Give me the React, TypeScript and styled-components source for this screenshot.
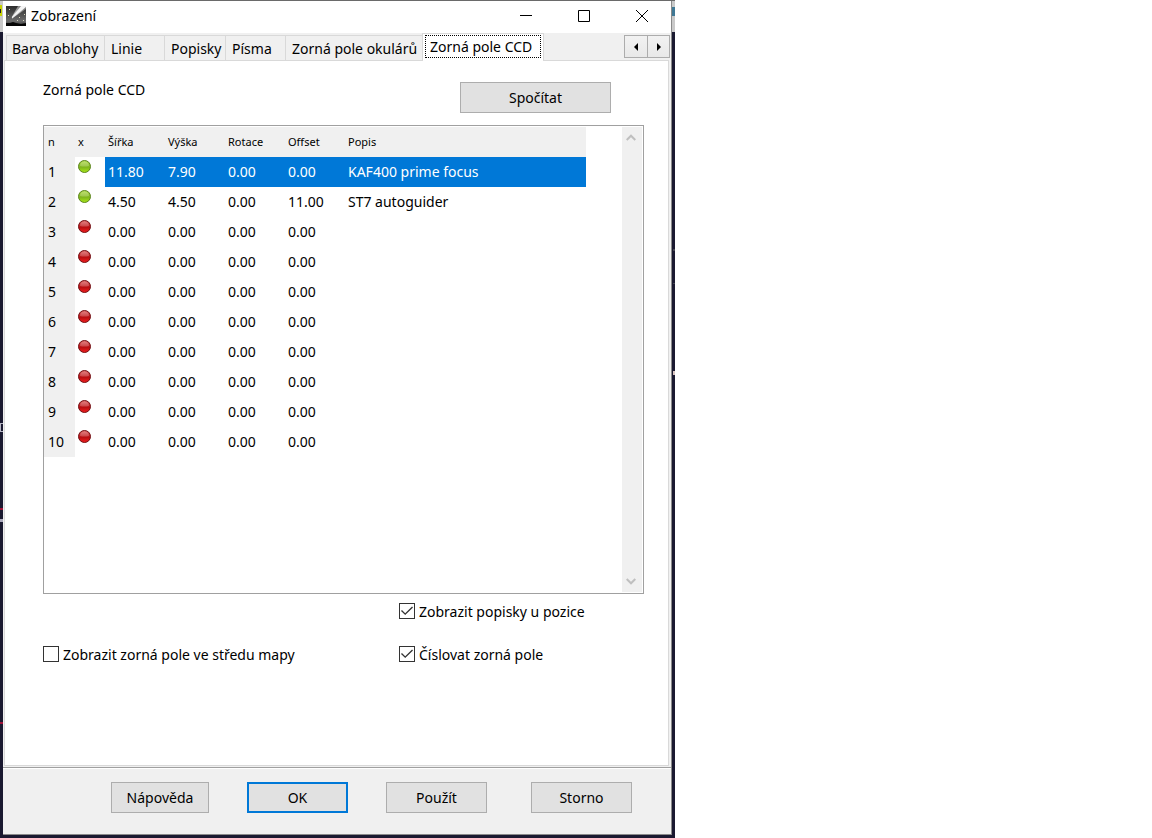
import React from 'react';
import styled, { createGlobalStyle, css } from 'styled-components';

const GlobalStyle = createGlobalStyle`
  * { box-sizing: border-box; }
  body {
    margin: 0;
    background: #fff;
    color: #000;
    font-family: "Noto Sans", "Open Sans", sans-serif;
    font-size: 14px;
    line-height: 20px;
  }
  button, input { font: inherit; color: inherit; }
`;

const Desktop = styled.div`
  position: relative;
  display: flex;
  width: 100%;
  max-width: 675px;
  min-height: 100vh;
  padding: 1px 3px 3px;
  background: linear-gradient(#6a6a6a 1px, #c9c9c9 1px, #c9c9c9 32px, #1a1930 32px);
`;

const Sky = styled.svg`
  position: absolute;
  inset: 0;
  width: 100%;
  height: 100%;
`;

const Window = styled.main`
  position: relative;
  flex: 1;
  min-width: 0;
  display: flex;
  flex-direction: column;
  background: #f0f0f0;
  border-right: 1px solid #8a8a8a;
  border-bottom: 1px solid #8a8a8a;
`;

const TitleBar = styled.header`
  display: flex;
  height: 32px;
  padding: 5px 0 0 3px;
  background: #fff;
`;

const Title = styled.h1`
  flex: 1;
  margin: 0 0 0 5px;
  font-size: 14px;
  font-weight: 400;
`;

const CaptionButton = styled.button`
  display: grid;
  place-items: center;
  width: 58px;
  height: 20px;
  padding: 0;
  border: 0;
  background: none;
`;

const TabStrip = styled.nav`
  display: flex;
  align-items: flex-end;
  height: 27px;
  padding-left: 3px;
`;

const Tab = styled.button<{ $width: number; $active?: boolean }>`
  width: ${(p) => p.$width}px;
  height: 25px;
  padding: 2px 0 0 6px;
  border: 1px solid #d9d9d9;
  border-width: 1px 0 0 1px;
  background: #f0f0f0;
  text-align: left;
  white-space: nowrap;
  &:first-child { padding-left: 5px; }
  ${(p) =>
    p.$active &&
    css`
      position: relative;
      height: 28px;
      margin-bottom: -1px;
      padding: 0 2px 2px;
      border-right-width: 1px;
      background: #fff;
    `}
`;

const Focus = styled.span`
  display: block;
  padding-left: 4px;
  border: 1px dotted #000;
  line-height: 21px;
`;

const Spinner = styled.div`
  display: flex;
  align-self: flex-start;
  margin: 2px 1px 0 auto;
`;

const SpinButton = styled.button`
  display: grid;
  place-items: center;
  width: 24px;
  height: 23px;
  padding: 0;
  border: 1px solid #acacac;
  background: linear-gradient(#f2f2f2, #e8e8e8);
  & + & { width: 22px; border-left: 0; }
`;

const Panel = styled.section`
  flex: 1;
  margin: 0 2px 1px 1px;
  padding: 21px 24px 0 38px;
  border: 1px solid #d9d9d9;
  background: #fff;
`;

const PanelHead = styled.div`
  display: flex;
  justify-content: space-between;
  padding-right: 33px;
`;

const Heading = styled.h2`
  margin: 0;
  font-size: 14px;
  font-weight: 400;
  line-height: 16px;
`;

const PushButton = styled.button<{ $width: number; $primary?: boolean }>`
  width: ${(p) => p.$width}px;
  height: 31px;
  padding: 0;
  border: ${(p) => (p.$primary ? '2px solid #0078d7' : '1px solid #adadad')};
  background: #e1e1e1;
`;

const ListFrame = styled.div`
  display: flex;
  justify-content: space-between;
  height: 469px;
  margin-top: 12px;
  padding: 1px 1px 1px 0;
  border: 1px solid #a0a0a0;
`;

const Grid = styled.table`
  flex: 0 1 542px;
  width: 542px;
  height: min-content;
  table-layout: fixed;
  border-collapse: collapse;
`;

const HeadCell = styled.th<{ $width?: number }>`
  width: ${(p) => (p.$width ? `${p.$width}px` : 'auto')};
  height: 30px;
  padding: 0 3px;
  background: #f0f0f0;
  font-size: 11px;
  font-weight: 400;
  text-align: left;
  &:first-child { padding-left: 4px; }
`;

const NumberCell = styled.th`
  height: 30px;
  padding: 0 3px 0 4px;
  background: #f0f0f0;
  font-weight: 400;
  text-align: left;
`;

const StateCell = styled.td`
  padding: 3px 3px 0;
  vertical-align: top;
  svg { display: block; }
`;

const Cell = styled.td<{ $selected: boolean }>`
  padding: 0 3px;
  background: ${(p) => (p.$selected ? '#0078d7' : '#fff')};
  color: ${(p) => (p.$selected ? '#fff' : '#000')};
`;

const ScrollTrack = styled.div`
  display: flex;
  flex-direction: column;
  justify-content: space-between;
  width: 20px;
  background: #f0f0f0;
`;

const ScrollButton = styled.button`
  display: grid;
  place-items: center;
  height: 21px;
  padding: 0 2px 0 0;
  border: 0;
  background: none;
`;

const Options = styled.div`
  display: grid;
  grid-template-columns: 356px 1fr;
  row-gap: 23px;
  margin-top: 7px;
`;

const Option = styled.label`
  grid-column: 2;
  display: flex;
  align-items: center;
  gap: 4px;
  height: 20px;
`;

const CenterOption = styled(Option)`
  grid-column: 1;
`;

const OptionText = styled.span`
  padding-top: 2px;
`;

const Tick = styled.input`
  appearance: none;
  flex: none;
  width: 16px;
  height: 16px;
  margin: 0;
  border: 1px solid #333;
  background: #fff;
  display: grid;
  place-items: center;
  &:checked::before {
    content: "";
    width: 12px;
    height: 10px;
    background: #333;
    clip-path: polygon(0 50%, 8% 41%, 35% 72%, 92% 5%, 100% 14%, 35% 90%);
  }
`;

const Footer = styled.footer`
  display: flex;
  justify-content: space-between;
  height: 67px;
  padding: 14px 39px 0 108px;
  border-top: 1px solid #a0a0a0;
  box-shadow: inset 0 1px #fff;
`;

const ButtonGroup = styled.div`
  display: flex;
  gap: 38px;
`;

const CometIcon = () => (
  <svg width="20" height="20" viewBox="0 0 20 20" aria-hidden="true">
    <defs>
      <linearGradient id="night" x1="0" y1="0" x2="0" y2="1">
        <stop offset="0" stopColor="#2c2c2c" />
        <stop offset=".75" stopColor="#6c6c6c" />
        <stop offset="1" stopColor="#333" />
      </linearGradient>
      <linearGradient id="tail" x1="0" y1="1" x2="1" y2="0">
        <stop offset="0" stopColor="#fff" />
        <stop offset="1" stopColor="#9a9a9a" />
      </linearGradient>
    </defs>
    <path d="M0 0h20v20H0z" fill="url(#night)" />
    <path d="M6 12.500 5.800 11 12 0h8v3z" fill="url(#tail)" opacity=".65" />
    <path d="M6 12.500 6 11 15 0h5v1z" fill="#f4f4f4" />
    <path d="M0 17l4 0 3-1 3 1 5 1 5-1v3H0z" fill="#050505" />
    <path d="M3 3h1v1H3zM13 11h1v1h-1zM17 14h1v1h-1zM2 9h1v1H2zM11 14h1v1h-1zM18 8h1v1h-1z" fill="#d8d8c0" />
  </svg>
);

const Bullet = ({ on }: { on: boolean }) => {
  const id = on ? 'on' : 'off';
  const [top, middle, bottom, rim] = on
    ? ['#b4dc50', '#7fb41c', '#a8e818', '#5c8420']
    : ['#e06a6a', '#b80c10', '#f02020', '#701014'];
  return (
    <svg width="13" height="13" viewBox="0 0 13 13" role="img" aria-label={on ? 'ano' : 'ne'}>
      <defs>
        <linearGradient id={id} x1="0" y1="0" x2="0" y2="1">
          <stop offset="0" stopColor={top} />
          <stop offset=".55" stopColor={middle} />
          <stop offset="1" stopColor={bottom} />
        </linearGradient>
      </defs>
      <circle cx="6.5" cy="6.5" r="6" fill={`url(#${id})`} stroke={rim} />
      <path d="M2 6C2 0 11 0 11 6Q6.500 7 2 6Z" fill="#fff" opacity=".2" />
    </svg>
  );
};

const tabs: [string, number][] = [
  ['Barva oblohy', 98],
  ['Linie', 60],
  ['Popisky', 61],
  ['Písma', 60],
  ['Zorná pole okulárů', 137],
];

const columns: [string, number?][] = [
  ['n', 31], ['x', 30], ['Šířka', 60], ['Výška', 60], ['Rotace', 60], ['Offset', 60], ['Popis'],
];

const rows: string[][] = [
  ['11.80', '7.90', '0.00', '0.00', 'KAF400 prime focus'],
  ['4.50', '4.50', '0.00', '11.00', 'ST7 autoguider'],
  ...Array.from({ length: 8 }, () => ['0.00', '0.00', '0.00', '0.00', '']),
];

export default function App() {
  return (
    <>
      <GlobalStyle />
      <Desktop>
        <Sky aria-hidden="true">
          <path d="M0 5h2v11H0z" fill="#c8d400" />
          <path d="M0 9h1v4H0z" fill="#222" />
          <path d="M672 7h3v9h-3z" fill="#3f7894" />
          <path d="M0 423h3v1H0zM0 424h1v7H0zM0 431h3v1H0z" fill="#b5b5c4" />
          <path d="M0 508h3v2H0zM0 722h3v2H0z" fill="#a01238" />
          <path d="M0 519h3v3H0z" fill="#aaa8bb" />
          <path d="M673 371h2v4h-2z" fill="#d8c4c0" />
          <path d="M673 283h2v1h-2zM673 249h2v2h-2z" fill="#444450" />
        </Sky>
        <Window>
          <TitleBar>
            <CometIcon />
            <Title>Zobrazení</Title>
            <CaptionButton aria-label="Minimalizovat">
              <svg width="12" height="12"><path d="M0 5.500h12" stroke="#000" /></svg>
            </CaptionButton>
            <CaptionButton aria-label="Maximalizovat">
              <svg width="12" height="12"><path d="M.5.5h11v11H.5z" fill="none" stroke="#000" /></svg>
            </CaptionButton>
            <CaptionButton aria-label="Zavřít">
              <svg width="12" height="12"><path d="M0 0l12 12M12 0L0 12" stroke="#000" /></svg>
            </CaptionButton>
          </TitleBar>
          <TabStrip>
            {tabs.map(([name, width]) => (
              <Tab key={name} $width={width}>{name}</Tab>
            ))}
            <Tab $width={122} $active><Focus>Zorná pole CCD</Focus></Tab>
            <Spinner>
              <SpinButton aria-label="Předchozí karty">
                <svg width="4" height="8"><path d="M4 0v8L0 4z" /></svg>
              </SpinButton>
              <SpinButton aria-label="Další karty">
                <svg width="4" height="8"><path d="M0 0v8l4-4z" /></svg>
              </SpinButton>
            </Spinner>
          </TabStrip>
          <Panel>
            <PanelHead>
              <Heading>Zorná pole CCD</Heading>
              <PushButton $width={151}>Spočítat</PushButton>
            </PanelHead>
            <ListFrame>
              <Grid>
                <thead>
                  <tr>
                    {columns.map(([name, width]) => (
                      <HeadCell key={name} $width={width} scope="col">{name}</HeadCell>
                    ))}
                  </tr>
                </thead>
                <tbody>
                  {rows.map((row, r) => (
                    <tr key={r}>
                      <NumberCell scope="row">{r + 1}</NumberCell>
                      <StateCell><Bullet on={r < 2} /></StateCell>
                      {row.map((value, c) => (
                        <Cell key={c} $selected={r === 0}>{value}</Cell>
                      ))}
                    </tr>
                  ))}
                </tbody>
              </Grid>
              <ScrollTrack>
                <ScrollButton aria-label="Nahoru">
                  <svg width="10" height="7"><path d="M.7 6L5 1.700 9.300 6" fill="none" stroke="#bfbfbf" strokeWidth="2" /></svg>
                </ScrollButton>
                <ScrollButton aria-label="Dolů">
                  <svg width="10" height="7"><path d="M.7 1L5 5.300 9.300 1" fill="none" stroke="#bfbfbf" strokeWidth="2" /></svg>
                </ScrollButton>
              </ScrollTrack>
            </ListFrame>
            <Options>
              <Option>
                <Tick type="checkbox" defaultChecked />
                <OptionText>Zobrazit popisky u pozice</OptionText>
              </Option>
              <CenterOption>
                <Tick type="checkbox" />
                <OptionText>Zobrazit zorná pole ve středu mapy</OptionText>
              </CenterOption>
              <Option>
                <Tick type="checkbox" defaultChecked />
                <OptionText>Číslovat zorná pole</OptionText>
              </Option>
            </Options>
          </Panel>
          <Footer>
            <ButtonGroup>
              <PushButton $width={98}>Nápověda</PushButton>
              <PushButton $width={101} $primary>OK</PushButton>
              <PushButton $width={101}>Použít</PushButton>
            </ButtonGroup>
            <PushButton $width={101}>Storno</PushButton>
          </Footer>
        </Window>
      </Desktop>
    </>
  );
}
